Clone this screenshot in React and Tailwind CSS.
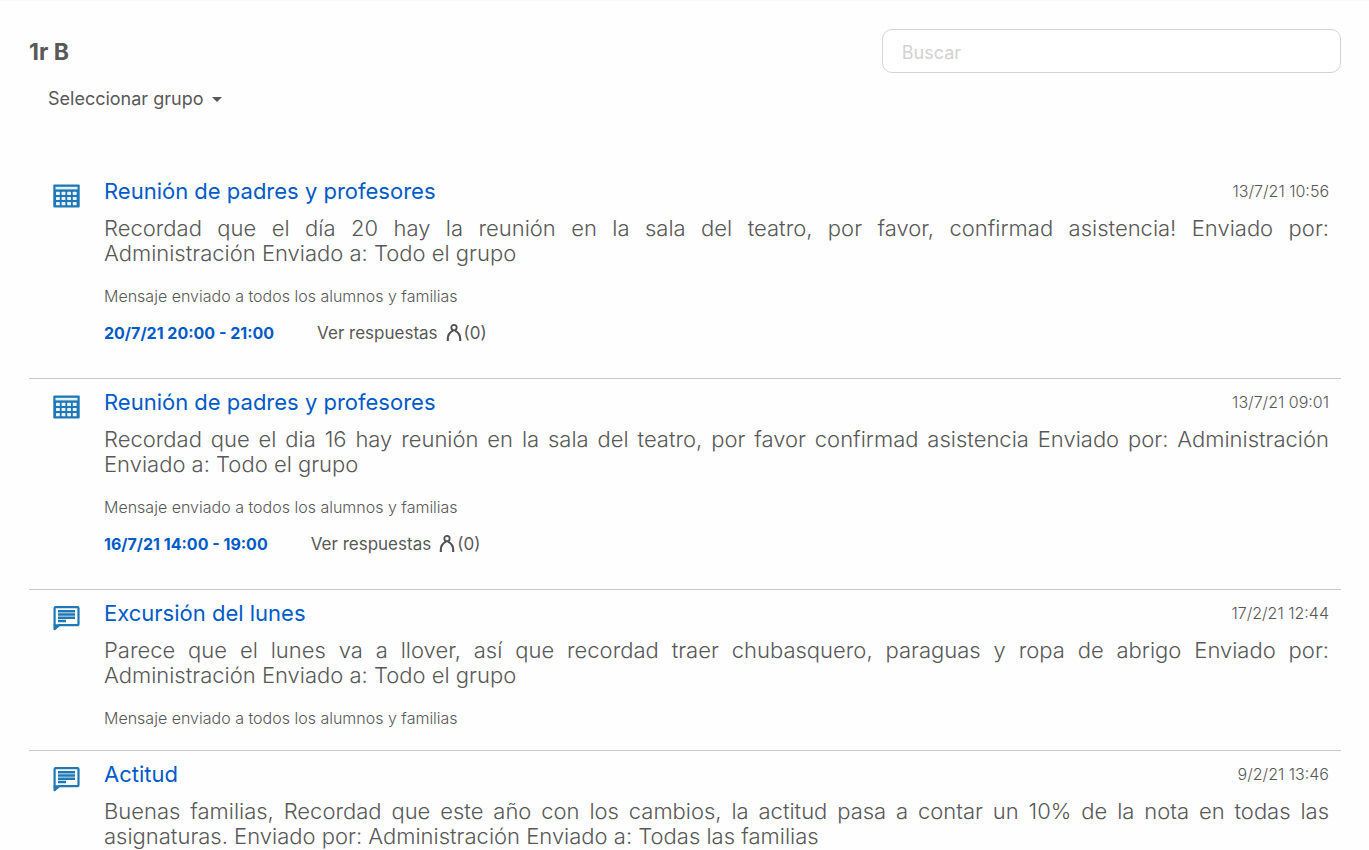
import { useState } from 'react'

const MESSAGES = [
  {
    id: 1,
    type: 'event',
    title: 'Reunión de padres y profesores',
    date: '13/7/21 10:56',
    body: 'Recordad que el día 20 hay la reunión en la sala del teatro, por favor, confirmad asistencia! Enviado por: Administración\u00a0Enviado a: Todo el grupo',
    when: '20/7/21 20:00 - 21:00',
    replies: 0,
  },
  {
    id: 2,
    type: 'event',
    title: 'Reunión de padres y profesores',
    date: '13/7/21 09:01',
    body: 'Recordad que el dia 16 hay reunión en la sala del teatro, por favor confirmad asistencia Enviado por: Administración Enviado a: Todo el grupo',
    when: '16/7/21 14:00 - 19:00',
    replies: 0,
  },
  {
    id: 3,
    type: 'message',
    title: 'Excursión del lunes',
    date: '17/2/21 12:44',
    body: 'Parece que el lunes va a llover, así que recordad traer chubasquero, paraguas y ropa de abrigo Enviado por: Administración Enviado a: Todo el grupo',
  },
  {
    id: 4,
    type: 'message',
    title: 'Actitud',
    date: '9/2/21 13:46',
    body: 'Buenas familias, Recordad que este año con los cambios, la actitud pasa a contar un 10% de la nota en todas las asignaturas. Enviado por: Administración Enviado a: Todas las familias',
  },
]

function CalendarIcon() {
  return (
    <svg viewBox="0 0 28 24" className="h-6 w-7" aria-hidden="true">
      <rect x="0.3" y="0.5" width="26.4" height="23" rx="1" fill="#1f78b4" />
      <rect x="2.5" y="2.8" width="22" height="2.6" fill="#e3f1fa" />
      {[7.8, 12.9, 18].map(y =>
        [3, 8.6, 14.2, 19.8].map(x => (
          <rect key={`${x}-${y}`} x={x} y={y} width="3.8" height="3.2" rx="0.5" fill="#e9f4fa" />
        ))
      )}
    </svg>
  )
}

function ChatIcon() {
  return (
    <svg viewBox="0 1 28 26" className="h-[26px] w-7" aria-hidden="true">
      <path
        d="M2.6 2.2h21.9q1 0 1 1v16q0 1-1 1H6.2l-4.6 4V3.2q0-1 1-1z"
        fill="#fff"
        stroke="#1f78b4"
        strokeWidth="2.2"
        strokeLinejoin="round"
      />
      <path d="M0.6 19.2h6.2L1.2 25z" fill="#1f78b4" />
      <path d="M5 6.3h17M5 9.5h17M5 12.7h17M5 15.9h8" stroke="#1f78b4" strokeWidth="2.5" />
    </svg>
  )
}

function PersonIcon() {
  return (
    <svg viewBox="0 0 16 18" className="h-[18px] w-4" fill="none" stroke="#505050" aria-hidden="true">
      <circle cx="8" cy="3.6" r="2.7" strokeWidth="1.8" />
      <path d="M1.8 17v-2C1.8 11 3.8 8.2 7 6.6M14.2 17v-2c0-4-2-6.800-5.200-8.400" strokeWidth="2.100" />
    </svg>
  )
}

function Message({ message }) {
  return (
    <li className="flex border-b border-[#c8c8c8] pt-2.5 pr-3 pl-6">
      <div className="w-[51px] shrink-0 pt-1.5">
        {message.type === 'event' ? <CalendarIcon /> : <ChatIcon />}
      </div>
      <div className="min-w-0 flex-1">
        <div className="flex items-center justify-between gap-4">
          <h2 className="text-[22px] leading-[26px]">
            <a href="#" className="text-[#005bc7]">{message.title}</a>
          </h2>
          <time className="shrink-0 text-base font-light">{message.date}</time>
        </div>
        <p className="mt-3 text-justify text-[22px] leading-[25px] font-light">{message.body}</p>
        <p className="mt-5 mb-[22px] text-base leading-5 font-light">
          Mensaje enviado a todos los alumnos y familias
        </p>
        {message.when && (
          <div className="-mt-1 mb-9 flex h-[18px] items-center">
            <time className="text-base leading-[18px] font-bold text-[#005bc7]">{message.when}</time>
            <a href="#" className="ml-[43px] flex items-center text-[17px] leading-[18px]">
              Ver respuestas
              <span className="ml-2"><PersonIcon /></span>
              <span className="ml-0.5">({message.replies})</span>
            </a>
          </div>
        )}
      </div>
    </li>
  )
}

export default function App() {
  const [search, setSearch] = useState('')

  const term = search.trim().toLowerCase()
  const visible = MESSAGES.filter(m => (m.title + ' ' + m.body).toLowerCase().includes(term))

  return (
    <div className="min-h-screen border-t border-[#fafafa] bg-[#fefefe] pt-7 pr-7 pl-[29px] font-['Inter',sans-serif] text-[#585858]">
      <header className="flex items-start justify-between">
        <div>
          <h1 className="mt-2 text-[23px] leading-[30px] font-bold">1r B</h1>
          <label className="mt-5 ml-[19px] flex items-center text-lg leading-6">
            <select aria-label="Seleccionar grupo" className="appearance-none bg-transparent outline-none">
              <option>Seleccionar grupo</option>
            </select>
            <svg viewBox="0 0 10 5" className="ml-2 h-[5px] w-2.5" fill="currentColor" aria-hidden="true">
              <path d="M0 0h10L5 5z" />
            </svg>
          </label>
        </div>
        <input
          type="text"
          aria-label="Buscar"
          placeholder="Buscar"
          value={search}
          onChange={e => setSearch(e.target.value)}
          className="h-11 w-[35%] rounded-[10px] border border-[#d4d4d4] bg-white px-[19px] pt-0.5 text-lg outline-none placeholder:text-[#d2d2d2]"
        />
      </header>

      <ul className="mt-[57px]">
        {visible.map(m => <Message key={m.id} message={m} />)}
      </ul>
    </div>
  )
}
